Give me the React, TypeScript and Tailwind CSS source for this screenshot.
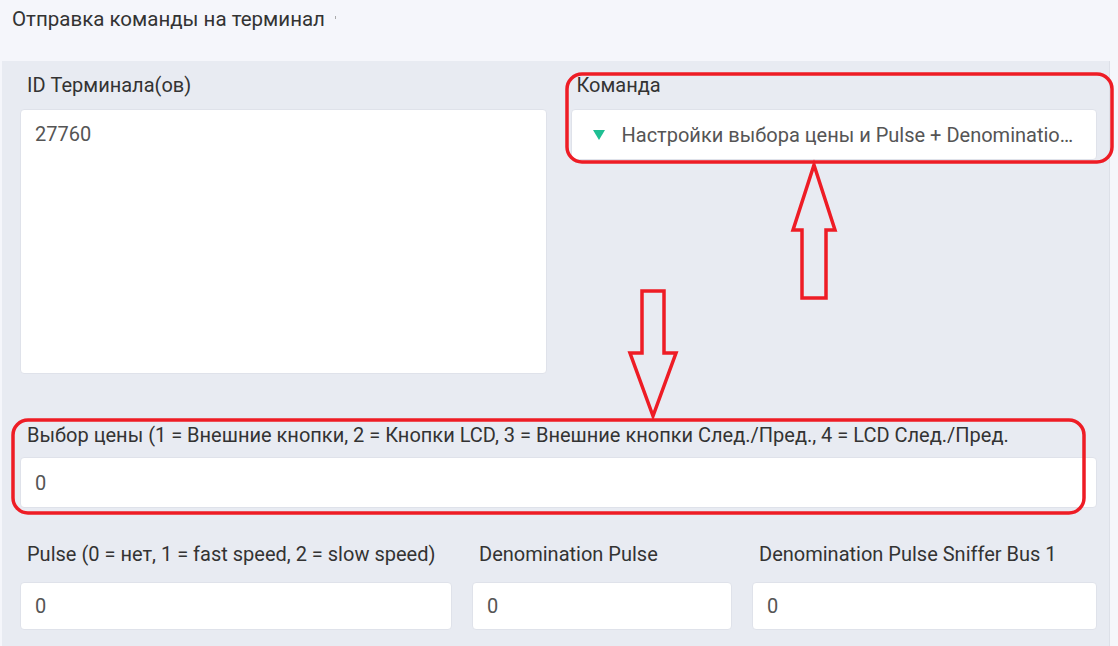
import React from "react";

const font = { fontFamily: "Roboto, 'Noto Sans', sans-serif" };

function Field({
  label,
  value,
  box,
  gap,
}: {
  label: string;
  value: string;
  box: string;
  gap: string;
}) {
  return (
    <div className="flex flex-col">
      <label
        className={`${gap} pl-[7px] text-[20px] leading-6 whitespace-nowrap text-[#333]`}
      >
        {label}
      </label>
      <div
        className={`${box} flex items-center rounded-[4px] border border-[#dfe2ea] bg-white pl-[14px] text-[20px] text-[#555]`}
      >
        {value}
      </div>
    </div>
  );
}

function Annotations() {
  return (
    <svg
      className="pointer-events-none absolute top-0 left-0"
      width="1118"
      height="646"
      viewBox="0 0 1118 646"
      fill="none"
      stroke="#ee1c25"
      strokeWidth="3.5"
    >
      <rect x="567" y="74" width="545" height="88" rx="15" />
      <rect x="13" y="420" width="1071" height="93" rx="15" />
      <polygon points="814,165 835,230 826,230 826,298 802,298 802,230 793,230" />
      <polygon points="642,291 664,291 664,353 676,353 653,416 630,353 642,353" />
    </svg>
  );
}

export default function App() {
  return (
    <div
      className="relative h-[646px] w-[1118px] overflow-hidden bg-[#f5f6fb]"
      style={font}
    >
      <div className="flex h-[61px] items-start pt-[7px] pl-3">
        <h1 className="text-[20.5px] leading-6 text-[#333]">
          Отправка команды на терминал
        </h1>
        <span className="mt-[9px] ml-[10px] h-[3px] w-px bg-[#aaa]" />
      </div>

      <div className="ml-[2px] h-[585px] w-[1108px] border-r border-[#dde0e8] bg-[#e8ebf2] pt-[12px] pr-[12px] pl-[18px]">
        <div className="grid grid-cols-2 gap-6">
          <div className="flex flex-col">
            <label className="mb-3 pl-[7px] text-[20px] leading-6 text-[#333]">
              ID Терминала(ов)
            </label>
            <div className="h-[265px] rounded-[4px] border border-[#dfe2ea] bg-white pt-[9px] pl-[14px] text-[20px] text-[#555]">
              27760
            </div>
          </div>
          <div className="flex flex-col">
            <label className="mb-3 pl-[6px] text-[20px] leading-6 text-[#333]">
              Команда
            </label>
            <div className="flex h-[51px] items-center gap-[17px] rounded-[4px] border border-[#dfe2ea] bg-white pr-[14px] pl-[21px] text-[20px] text-[#555]">
              <svg width="12" height="10" viewBox="0 0 12 10" className="shrink-0">
                <polygon points="0,0 12,0 6,10" fill="#1fbf93" />
              </svg>
              <span className="truncate">
                Настройки выбора цены и Pulse + Denomination Pulse
              </span>
            </div>
          </div>
        </div>

        <div className="mt-[49px]">
          <Field
            label="Выбор цены (1 = Внешние кнопки, 2 = Кнопки LCD, 3 = Внешние кнопки След./Пред., 4 = LCD След./Пред."
            value="0"
            box="h-[51px]"
            gap="mb-[10px]"
          />
        </div>

        <div className="mt-[34px] grid grid-cols-[432px_260px_1fr] gap-5">
          <Field
            label="Pulse (0 = нет, 1 = fast speed, 2 = slow speed)"
            value="0"
            box="h-[48px]"
            gap="mb-4"
          />
          <Field label="Denomination Pulse" value="0" box="h-[48px]" gap="mb-4" />
          <Field
            label="Denomination Pulse Sniffer Bus 1"
            value="0"
            box="h-[48px]"
            gap="mb-4"
          />
        </div>
      </div>

      <Annotations />
    </div>
  );
}
